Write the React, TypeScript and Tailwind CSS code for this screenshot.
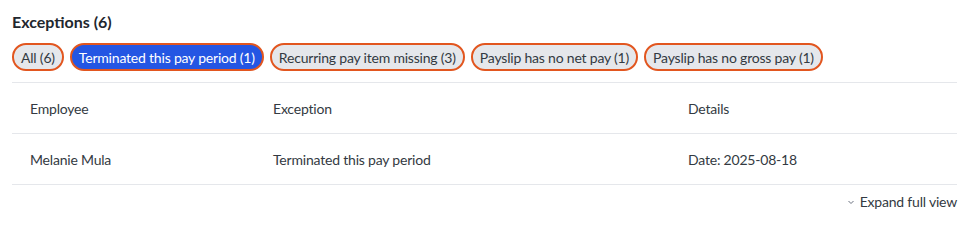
import React from 'react';

const filters = [
  { label: 'All (6)', active: false },
  { label: 'Terminated this pay period (1)', active: true },
  { label: 'Recurring pay item missing (3)', active: false },
  { label: 'Payslip has no net pay (1)', active: false },
  { label: 'Payslip has no gross pay (1)', active: false },
];

export default function App() {
  return (
    <div className="w-[965px] h-[220px] bg-white px-3 pt-3 text-[#333a42] tracking-[-0.2px]" style={{ fontFamily: 'Lato, "Noto Sans", sans-serif' }}>
      <h2 className="text-[16px] font-bold leading-5 tracking-normal text-[#22272e]">Exceptions (6)</h2>

      <div className="mt-[11px] flex gap-[6px]">
        {filters.map((f) => (
          <button
            key={f.label}
            className={
              f.active
                ? 'h-[28px] rounded-full border-2 border-[#e2561f] bg-[#2456e3] px-[7px] text-[14px] text-white'
                : 'h-[28px] rounded-full border-2 border-[#e2561f] bg-[#e5e7eb] px-[7px] text-[14px] text-[#333a42]'
            }
          >
            {f.label}
          </button>
        ))}
      </div>

      <div className="mt-[11px] border-t border-[#e5e7eb] w-[945px]">
        <div className="grid grid-cols-[261px_415px_1fr] h-[51px] items-center border-b border-[#e5e7eb] text-[14px]">
          <div className="pl-[18px]">Employee</div>
          <div>Exception</div>
          <div>Details</div>
        </div>
        <div className="grid grid-cols-[261px_415px_1fr] h-[51px] items-center border-b border-[#e5e7eb] text-[14px]">
          <div className="pl-[18px]">Melanie Mula</div>
          <div>Terminated this pay period</div>
          <div>Date: 2025-08-18</div>
        </div>
        <div className="flex justify-end pt-[6px]">
          <button className="flex items-center gap-[5px] text-[14px] text-[#333a42]">
            <svg width="8" height="8" viewBox="0 0 8 8" fill="none" stroke="#6b7280" strokeWidth="1">
              <path d="M1.5 3 L4 5.5 L6.5 3" />
            </svg>
            Expand full view
          </button>
        </div>
      </div>
    </div>
  );
}
